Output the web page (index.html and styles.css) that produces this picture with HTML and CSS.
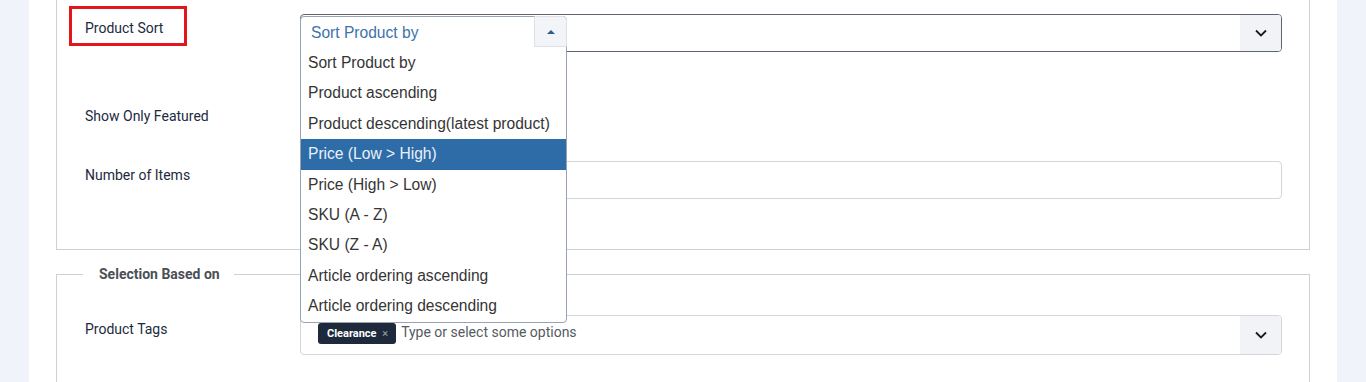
FILE: index.html
```html
<!DOCTYPE html>
<html lang="en">

<head>
    <meta charset="UTF-8" />
    <title>Product List Settings</title>
    <link rel="stylesheet" href="styles.css">
</head>

<body>
    <div class="page">

        <!-- Display options -->
        <fieldset class="group group-top">
            <div class="form-row row-sort">
                <label class="field-label highlight">Product Sort</label>
                <div class="control">
                    <div class="select select-focus">
                        <span class="select-value"></span>
                        <span class="select-addon">
                            <svg width="12" height="8" viewBox="0 0 12 8"><polyline points="1,1.5 6,6.5 11,1.5" fill="none" stroke="#1b1b1b" stroke-width="1.8"/></svg>
                        </span>
                    </div>

                    <!-- open dropdown -->
                    <div class="dropdown">
                        <div class="dropdown-head">
                            <span>Sort Product by</span>
                            <span class="dropdown-toggle"><span class="caret-up"></span></span>
                        </div>
                        <ul class="dropdown-list">
                            <li>Sort Product by</li>
                            <li>Product ascending</li>
                            <li>Product descending(latest product)</li>
                            <li class="active">Price (Low &gt; High)</li>
                            <li>Price (High &gt; Low)</li>
                            <li>SKU (A - Z)</li>
                            <li>SKU (Z - A)</li>
                            <li>Article ordering ascending</li>
                            <li>Article ordering descending</li>
                        </ul>
                    </div>
                </div>
            </div>

            <div class="form-row row-featured">
                <label class="field-label">Show Only Featured</label>
                <div class="control">
                    <span class="switch"></span>
                </div>
            </div>

            <div class="form-row row-items">
                <label class="field-label">Number of Items</label>
                <div class="control">
                    <input type="text" class="text-input">
                </div>
            </div>
        </fieldset>

        <!-- Selection -->
        <fieldset class="group group-selection">
            <legend>Selection Based on</legend>
            <div class="form-row">
                <label class="field-label">Product Tags</label>
                <div class="control">
                    <div class="select select-multi">
                        <span class="select-value">
                            <span class="tag">Clearance <span class="tag-x">×</span></span>
                            <span class="placeholder">Type or select some options</span>
                        </span>
                        <span class="select-addon">
                            <svg width="12" height="8" viewBox="0 0 12 8"><polyline points="1,1.5 6,6.5 11,1.5" fill="none" stroke="#1b1b1b" stroke-width="1.8"/></svg>
                        </span>
                    </div>
                </div>
            </div>
        </fieldset>

    </div>
</body>

</html>
```

FILE: styles.css
```css
body {
    font-family: Roboto, 'Liberation Sans', sans-serif;
    background-color: #f0f3f9;
    margin: 0;
    padding: 0;
}

.page {
    background-color: white;
    margin: 0 29px;
    padding: 0 27px;
    min-height: 382px;
    box-sizing: border-box;
}

.group {
    margin: 0;
    border: 1px solid #cdd1d6;
    padding: 0 27px 0 28px;
    min-width: 0;
}

.group-top {
    border-top: none;
    padding-top: 14px;
    padding-bottom: 50px;
}

.group-selection {
    margin-top: 14px;
    padding-top: 31px;
    padding-bottom: 30px;
}

legend {
    font-size: 14px;
    font-weight: bold;
    line-height: 20px;
    color: #4b4f56;
    padding: 0 14px 0 16px;
    margin-left: -2px;
}

.form-row {
    display: grid;
    grid-template-columns: 215px 1fr;
    align-items: start;
}

.row-sort {
    min-height: 88px;
}

.row-featured {
    min-height: 59px;
}

.field-label {
    font-size: 14px;
    line-height: 20px;
    padding-top: 4px;
    color: #1c2a3e;
}

.highlight {
    position: relative;
    justify-self: start;
}

.highlight::after {
    content: "";
    position: absolute;
    left: -16px;
    top: -8px;
    width: 118px;
    height: 40px;
    border: 3px solid #e5161b;
    box-sizing: border-box;
}

.control {
    position: relative;
}

.select {
    display: flex;
    height: 38px;
    border: 1px solid #d3d6da;
    border-radius: 4px;
    box-sizing: border-box;
    overflow: hidden;
}

.select-focus {
    border-color: #5d6670;
}

.select-multi {
    height: 40px;
}

.select-value {
    flex: 1;
    display: flex;
    align-items: flex-start;
    gap: 5px;
    padding-left: 17px;
    padding-top: 7px;
}

.select-addon {
    width: 41px;
    background-color: #f1f3f6;
    display: flex;
    align-items: center;
    justify-content: center;
}

.tag {
    background-color: #1e2a3c;
    color: white;
    font-size: 11px;
    font-weight: bold;
    border-radius: 3px;
    padding: 0 8px 0 9px;
    line-height: 21px;
}

.tag-x {
    color: #9aa3ae;
    font-weight: normal;
    margin-left: 3px;
}

.placeholder {
    font-size: 14px;
    line-height: 19px;
    color: #555b62;
}

.text-input {
    display: block;
    width: 100%;
    height: 38px;
    border: 1px solid #d3d6da;
    border-radius: 4px;
    box-sizing: border-box;
    padding: 0 12px;
}

.switch {
    display: block;
    width: 40px;
    height: 22px;
    border-radius: 11px;
    background-color: #e3e6ea;
}

/* open sort dropdown */
.dropdown {
    position: absolute;
    top: 2px;
    left: 0;
    width: 267px;
    background-color: white;
    border: 1px solid #98a3b2;
    border-radius: 4px;
    box-sizing: border-box;
    font-family: 'Liberation Sans', Arial, sans-serif;
    font-size: 15.6px;
    z-index: 2;
}

.dropdown-head {
    display: flex;
    align-items: center;
    justify-content: space-between;
    height: 31px;
    padding-left: 10px;
    color: #3e72aa;
}

.dropdown-toggle {
    width: 33px;
    height: 31px;
    align-self: flex-start;
    margin-top: -1px;
    margin-right: -1px;
    background-color: #f3f4f7;
    border: 1px solid #dde0e5;
    border-radius: 0 4px 0 0;
    box-sizing: border-box;
    display: flex;
    align-items: center;
    justify-content: center;
}

.caret-up {
    width: 0;
    height: 0;
    border-left: 4.5px solid transparent;
    border-right: 4.5px solid transparent;
    border-bottom: 4px solid #2b5d8e;
}

.dropdown-list {
    list-style: none;
    margin: 0;
    padding: 0;
}

.dropdown-list li {
    height: 30.4px;
    line-height: 30.4px;
    padding-left: 7px;
    color: #353535;
    white-space: nowrap;
}

.dropdown-list li.active {
    background-color: #2e6ca7;
    color: #eaf1fb;
}
```
